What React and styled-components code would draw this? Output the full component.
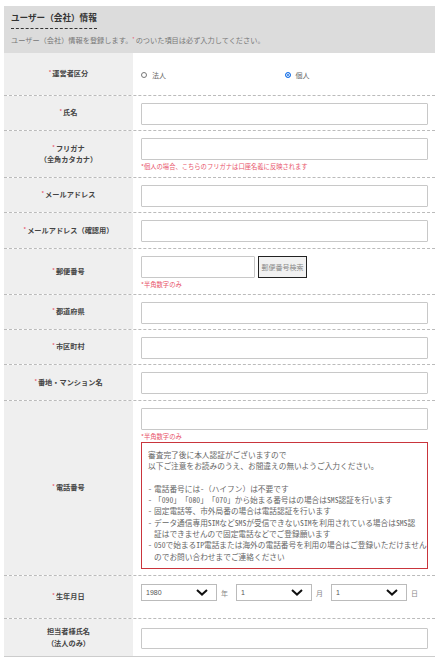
import React from 'react';
import styled, { createGlobalStyle } from 'styled-components';

const GlobalStyle = createGlobalStyle`
  body {
    margin: 0;
    background: #fff;
    font-family: "Noto Sans CJK JP", "Noto Sans", sans-serif;
    color: #444;
  }
`

const Page = styled.div`
  width: 431px;
  margin-left: 4px;
  padding-top: 6px;
`

const Header = styled.div`
  background-color: #dcdcdc;
  padding: 6px 7px 8px 7px;
`

const Title = styled.h1`
  display: block;
  width: fit-content;
  margin: 0;
  font-size: 8.6px;
  line-height: 11px;
  font-weight: bold;
  color: #333;
  padding-bottom: 5px;
  border-bottom: 1px dashed #333;
`

const Lead = styled.p`
  margin: 6px 0 0;
  font-size: 7.2px;
  line-height: 10px;
  color: #777;
`

const Req = styled.span`
  color: #e8546a;
  font-size: 5px;
  line-height: 0;
  vertical-align: 2px;
  margin-right: 1px;
`

const Row = styled.div`
  display: grid;
  grid-template-columns: 129px minmax(0, 1fr);
  min-height: ${p => p.$h}px;
  border-bottom: 1px ${p => (p.$last ? 'solid #ccc' : 'dashed #bbb')};
`

const Label = styled.div`
  background-color: #efefef;
  display: flex;
  align-items: center;
  justify-content: center;
  text-align: center;
  font-size: 7.2px;
  line-height: 11.5px;
  font-weight: bold;
  color: #444;
`

const Cell = styled.div`
  min-width: 0;
  padding: ${p => p.$pad || '7px 7px 5px 8px'};
  display: flex;
  flex-direction: column;
  justify-content: ${p => (p.$center ? 'center' : 'flex-start')};
`

const Input = styled.input`
  box-sizing: border-box;
  display: block;
  width: ${p => p.$w || '100%'};
  height: ${p => p.$ht || 22}px;
  margin: 0;
  border: 1px solid #c8c8c8;
  border-radius: 1px;
  background: #fff;
  padding: 0 4px;
  font-family: inherit;
  font-size: 7px;
`

const Hint = styled.div`
  margin-top: 2px;
  font-size: 6.3px;
  line-height: 9px;
  color: #e8546a;
  white-space: nowrap;
`

const Inline = styled.div`
  display: flex;
  align-items: center;
  gap: ${p => p.$gap || 3}px;
`

const SearchButton = styled.button`
  box-sizing: border-box;
  height: 22px;
  width: 49px;
  padding: 0;
  border: 1.5px solid #222;
  background: #f1f1f1;
  color: #888;
  font-family: inherit;
  font-size: 7px;
  white-space: nowrap;
`

const Radios = styled.div`
  display: flex;
`

const RadioOption = styled.label`
  flex: 1;
  display: flex;
  align-items: center;
  gap: 5px;
  font-size: 7px;
  line-height: 10px;
  color: #666;
`

const Dot = styled.span`
  box-sizing: border-box;
  width: 6px;
  height: 6px;
  border-radius: 50%;
  border: 1px solid ${p => (p.$on ? '#1a73e8' : '#777')};
  background: ${p => (p.$on ? '#1a73e8' : '#fff')};
  box-shadow: ${p => (p.$on ? 'inset 0 0 0 1px #fff' : 'none')};
`

const Notice = styled.div`
  margin-top: 1px;
  border: 1px solid #c9353c;
  padding: 6px;
  font-size: 7.7px;
  line-height: 11.3px;
  font-feature-settings: "hwid";
  color: #666;
  white-space: nowrap;
`

const Wide = styled.span`
  font-feature-settings: normal;
`

const Gap = styled.div`
  height: 11.3px;
`

const Item = styled.div`
  display: flex;
`

const Mark = styled.span`
  flex: 0 0 6px;
`

const SelectWrap = styled.div`
  position: relative;
  width: 76px;
  height: 17px;
`

const Select = styled.select`
  appearance: none;
  display: block;
  box-sizing: border-box;
  width: 100%;
  height: 100%;
  margin: 0;
  border: 1px solid #bbb;
  border-radius: 0;
  background: #fff;
  padding: 0 0 0 4px;
  font-family: "Liberation Sans", Arial, sans-serif;
  font-size: 7px;
  color: #555;
`

const Chevron = styled.svg`
  position: absolute;
  right: 9px;
  top: 5px;
  pointer-events: none;
`

const Unit = styled.span`
  font-size: 7px;
  line-height: 10px;
  color: #888;
  margin-right: ${p => p.$mr || 0}px;
`

const DateSelect = ({ value }) => (
  <SelectWrap>
    <Select defaultValue={value}>
      <option>{value}</option>
    </Select>
    <Chevron width="12" height="7" viewBox="0 0 12 7">
      <path d="M1 1l5 4.6L11 1" fill="none" stroke="#111" strokeWidth="2" />
    </Chevron>
  </SelectWrap>
)

const Field = ({ label, h, children, req = true, ...rest }) => (
  <Row $h={h} $last={rest.last}>
    <Label>
      <div>
        {req && <Req>*</Req>}
        {label}
      </div>
    </Label>
    <Cell $pad={rest.pad} $center={rest.center}>{children}</Cell>
  </Row>
)

const notes = [
  [<>電話番号には-<Wide>（ハイフン）</Wide>は不要です</>],
  ['「090」「080」「070」から始まる番号はの場合はSMS認証を行います'],
  ['固定電話等、市外局番の場合は電話認証を行います'],
  ['データ通信専用SIMなどSMSが受信できないSIMを利用されている場合はSMS認', '証はできませんので固定電話などでご登録願います'],
  ['050で始まるIP電話または海外の電話番号を利用の場合はご登録いただけません', 'のでお問い合わせまでご連絡ください'],
]

const App = () => {
  return (
    <Page>
      <GlobalStyle />
      <Header>
        <Title>ユーザー（会社）情報</Title>
        <Lead>
          ユーザー（会社）情報を登録します。<Req>*</Req>のついた項目は必ず入力してください。
        </Lead>
      </Header>

      <Field label="運営者区分" h={42} center>
        <Radios>
          <RadioOption><Dot />法人</RadioOption>
          <RadioOption><Dot $on />個人</RadioOption>
        </Radios>
      </Field>

      <Field label="氏名" h={34}>
        <Input />
      </Field>

      <Field label={<>フリガナ<br />（全角カタカナ）</>} h={46}>
        <Input />
        <Hint>*個人の場合、こちらのフリガナは口座名義に反映されます</Hint>
      </Field>

      <Field label="メールアドレス" h={34}>
        <Input />
      </Field>

      <Field label="メールアドレス（確認用）" h={35}>
        <Input />
      </Field>

      <Field label="郵便番号" h={44}>
        <Inline>
          <Input $w="114px" />
          <SearchButton>郵便番号検索</SearchButton>
        </Inline>
        <Hint>*半角数字のみ</Hint>
      </Field>

      <Field label="都道府県" h={34}>
        <Input />
      </Field>

      <Field label="市区町村" h={34}>
        <Input />
      </Field>

      <Field label="番地・マンション名" h={35}>
        <Input />
      </Field>

      <Field label="電話番号" h={174}>
        <Input />
        <Hint>*半角数字のみ</Hint>
        <Notice>
          <div>審査完了後に本人認証がございますので</div>
          <div>以下ご注意をお読みのうえ、お間違えの無いようご入力ください。</div>
          <Gap />
          {notes.map((lines, i) => (
            <Item key={i}>
              <Mark>-</Mark>
              <div>
                {lines.map((l, j) => <div key={j}>{l}</div>)}
              </div>
            </Item>
          ))}
        </Notice>
      </Field>

      <Field label="生年月日" h={42} pad="8px 7px 5px 8px">
        <Inline $gap={4}>
          <DateSelect value="1980" />
          <Unit $mr={4}>年</Unit>
          <DateSelect value="1" />
          <Unit $mr={4}>月</Unit>
          <DateSelect value="1" />
          <Unit>日</Unit>
        </Inline>
      </Field>

      <Field label={<>担当者様氏名<br />（法人のみ）</>} h={37} req={false} pad="9px 7px 7px 8px" last>
        <Input $ht={21} />
      </Field>
    </Page>
  )
}

export default App;
